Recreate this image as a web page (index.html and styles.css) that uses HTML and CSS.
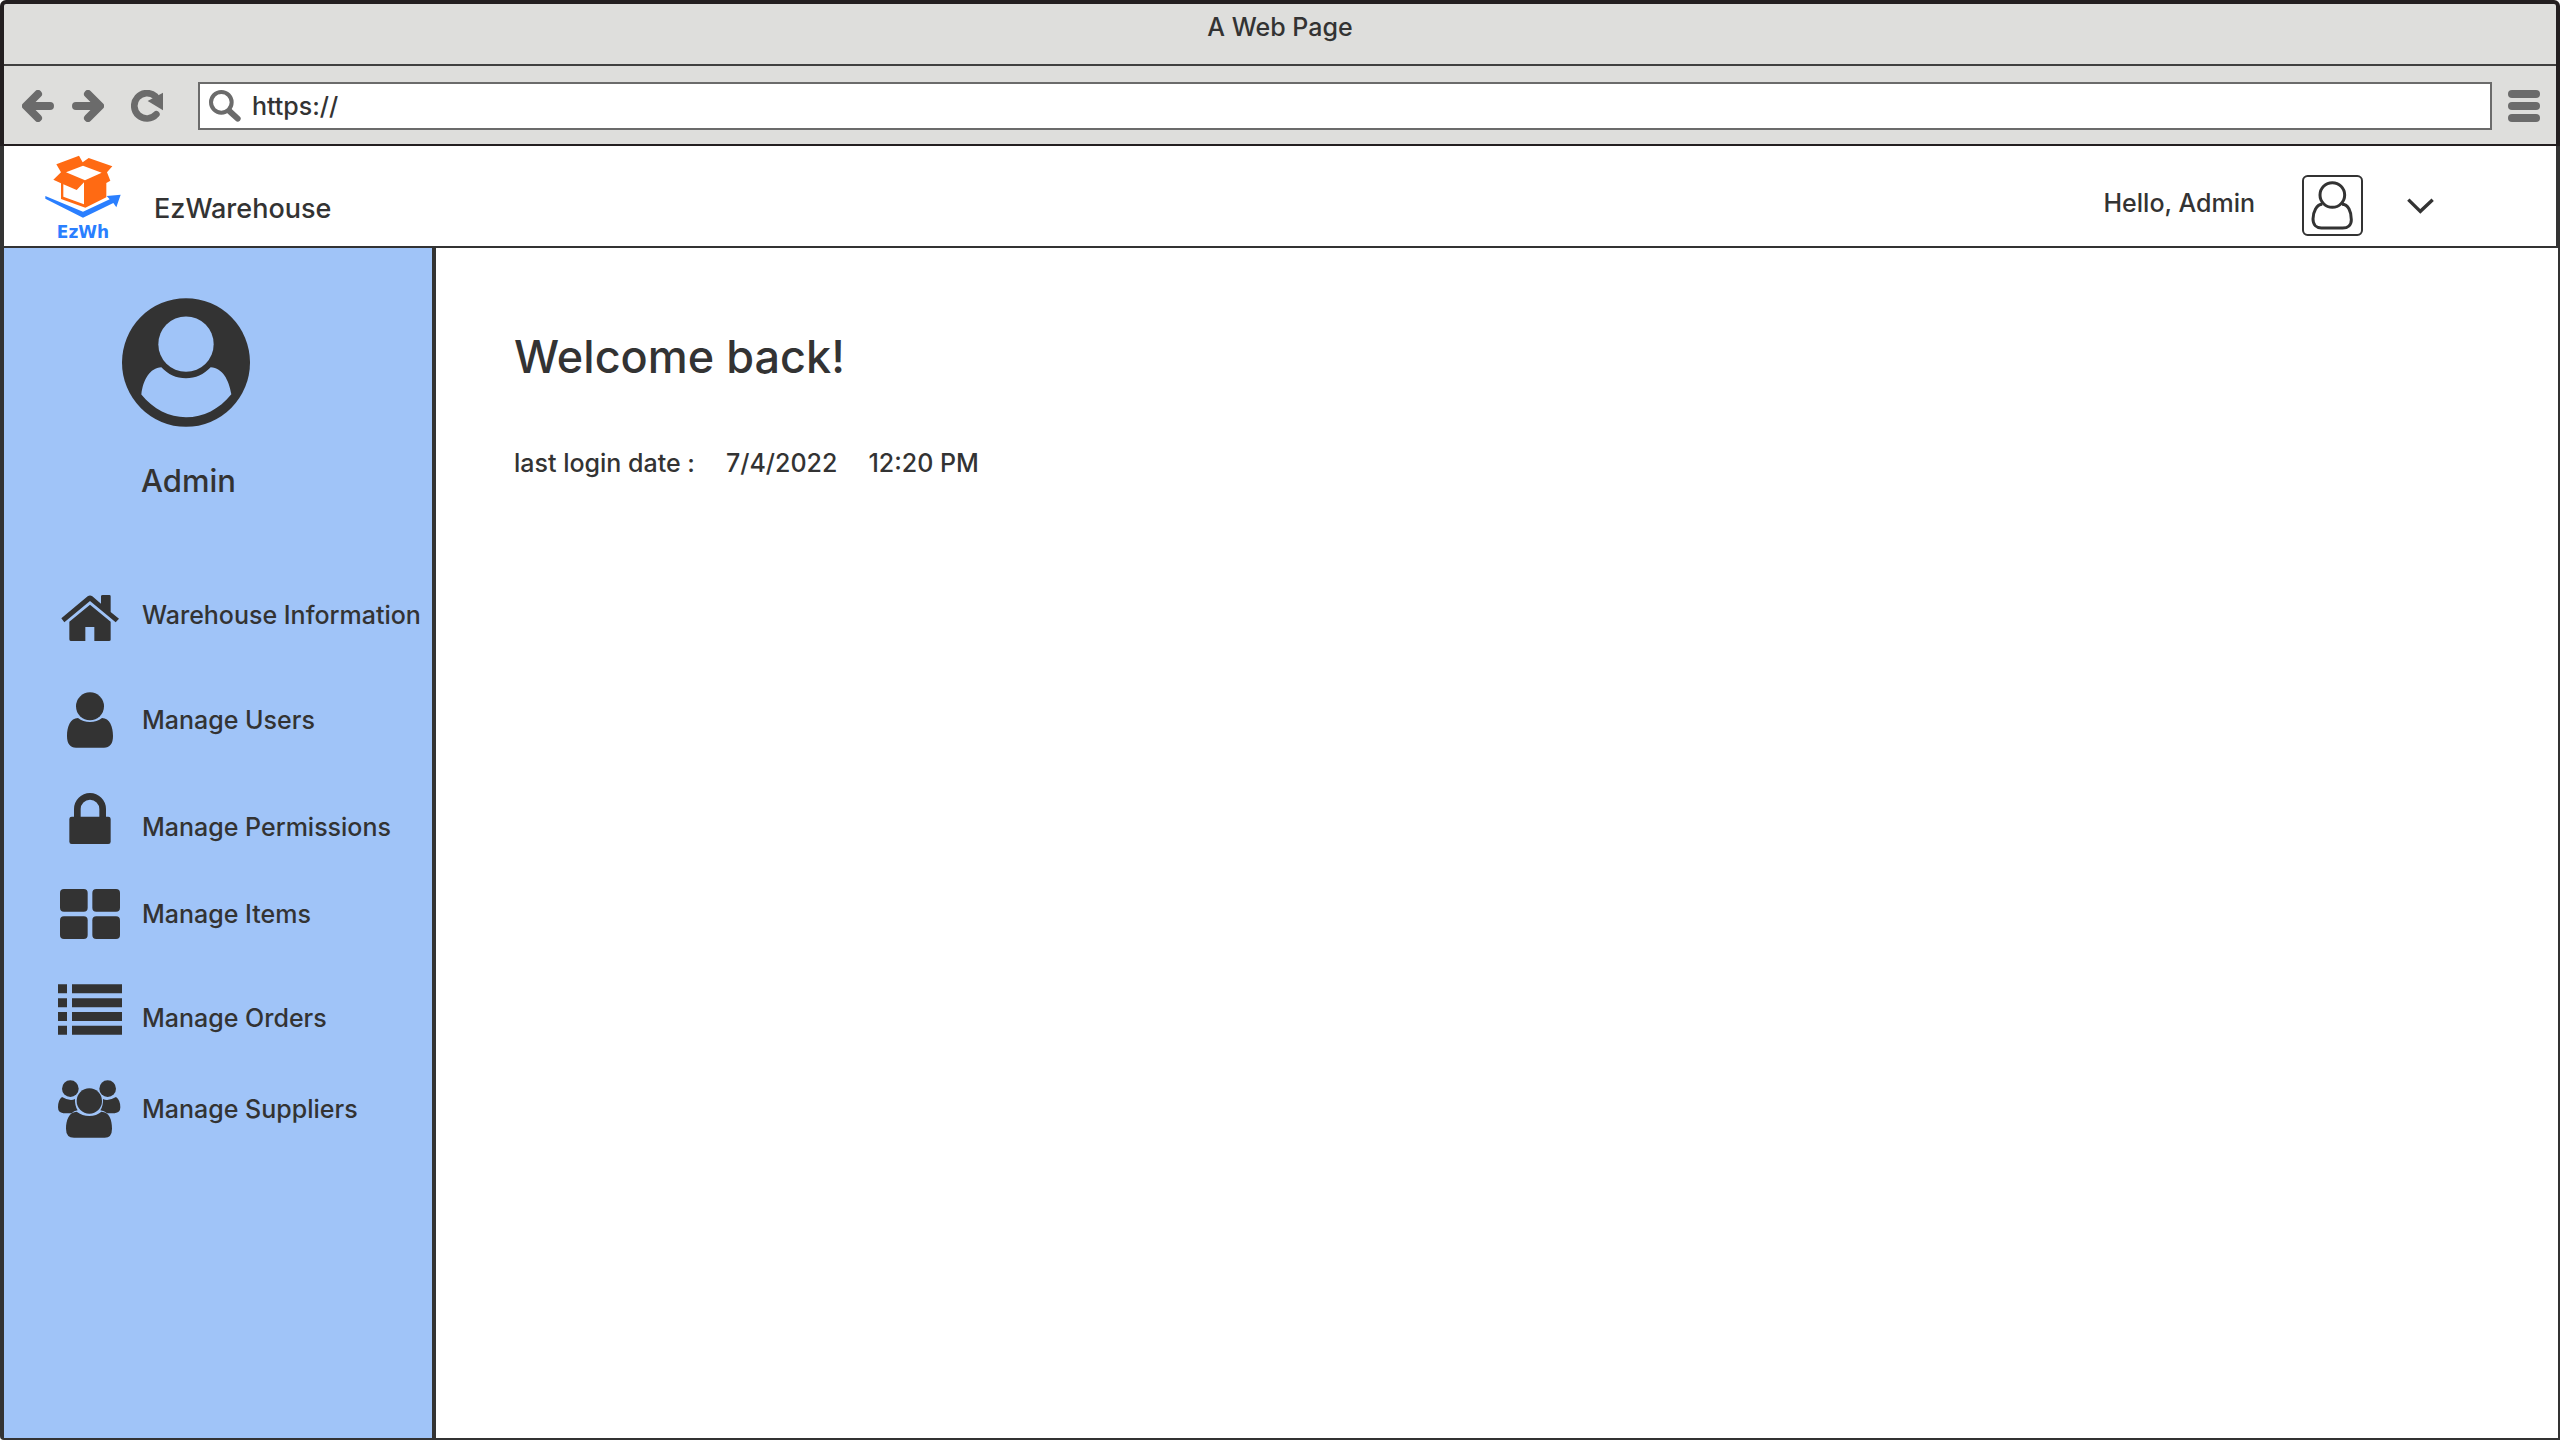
FILE: index.html
```html
<!DOCTYPE html>
<html lang="en">
<head>
<meta charset="utf-8">
<title>EzWarehouse</title>
<link rel="stylesheet" href="styles.css">
</head>
<body>
<div class="chrome">
  <div class="titlebar">A Web Page</div>
  <div class="toolbar">
    <button class="tool back" type="button" aria-label="Back">
      <svg viewBox="0 0 96 96"><path d="M84 48H16M48 12L12 48L48 84" fill="none" stroke="#6b6b6b" stroke-width="24" stroke-linecap="round" stroke-linejoin="round"/></svg>
    </button>
    <button class="tool forward" type="button" aria-label="Forward">
      <svg viewBox="0 0 96 96"><path d="M12 48H80M48 12L84 48L48 84" fill="none" stroke="#6b6b6b" stroke-width="24" stroke-linecap="round" stroke-linejoin="round"/></svg>
    </button>
    <button class="tool reload" type="button" aria-label="Reload">
      <svg viewBox="0 0 96 96"><path d="M76 73A38 38 0 1 1 73 19" fill="none" stroke="#6b6b6b" stroke-width="20" stroke-linecap="round"/><path d="M96 8V61L50 33Z" fill="#6b6b6b"/></svg>
    </button>
    <div class="address">
      <svg class="search" viewBox="0 0 96 96"><circle cx="37" cy="37" r="31" fill="none" stroke="#6b6b6b" stroke-width="12"/><path d="M61 63L86 86" fill="none" stroke="#6b6b6b" stroke-width="18" stroke-linecap="round"/></svg>
      <input class="url" type="text" value="https://" aria-label="Address">
    </div>
    <button class="tool menu" type="button" aria-label="Menu">
      <svg viewBox="0 0 32 32" fill="#6b6b6b"><rect width="32" height="8" rx="4"/><rect y="12" width="32" height="8" rx="4"/><rect y="24" width="32" height="8" rx="4"/></svg>
    </button>
  </div>
</div>

<header class="header">
  <a class="logo" href="#" aria-label="EzWh home">
    <svg class="logo-mark" viewBox="134 465 228 189">
      <path d="M168 493L236 467L247 487L265 474L336 499L320 517L330 542L318 549V592L255 623L182 597V550L159 539L182 517Z" fill="#ff6a13"/>
      <path d="M197 517L248 497L304 518L254 541ZM189 553L229 570L251 547V613L189 590Z" fill="#fff"/>
      <path d="M135 588L248 635L328 598L319 588L361 584L348 622L339 609L248 653L135 596Z" fill="#2a7fff"/>
    </svg>
    <span class="logo-text">EzWh</span>
  </a>
  <span class="brand">EzWarehouse</span>
  <span class="hello">Hello, Admin</span>
  <button class="account" type="button" aria-label="Account menu">
    <svg class="avatar-box" viewBox="0 0 183 183" fill="none" stroke="#333"><rect x="3" y="3" width="177" height="177" rx="14" stroke-width="6"/><circle cx="91" cy="60" r="37" stroke-width="9"/><path d="M61 88C44 88 33 110 33 132C33 150 44 159 58 159H122C138 159 148 150 148 134C148 110 139 88 120 88" stroke-width="9"/></svg>
    <svg class="chevron" viewBox="0 0 81 48"><path d="M4 5L40 40L77 5" fill="none" stroke="#333" stroke-width="10"/></svg>
  </button>
</header>

<div class="body">
  <aside class="sidebar">
    <div class="profile">
      <svg class="portrait" viewBox="0 0 384 386"><ellipse cx="192" cy="193" rx="192" ry="193" fill="#333"/><g fill="#a0c4f8"><circle cx="192" cy="138" r="83"/><path d="M118 207C84 209 63 244 58 289C94 334 142 357 192 357C244 357 292 333 328 288C320 243 302 210 266 207C245 229 221 240 192 240C162 240 139 229 118 207Z"/></g></svg>
      <span class="profile-name">Admin</span>
    </div>
    <nav class="nav">
      <a class="item high" href="#">
        <svg viewBox="0 0 192 156" height="52" fill="#333"><path d="M10 70L89 4Q96 -1 103 4L129 26V4Q129 0 134 0H154Q158 0 158 4V51L183 71L173 82L96 18L19 82Z"/><path d="M96 29L158 80V134Q158 138 153 138H109V96H82V138H38Q34 138 34 133V80Z"/></svg>
        <span>Warehouse Information</span>
      </a>
      <a class="item" href="#">
        <svg viewBox="0 0 192 168" height="56" fill="#333"><circle cx="96" cy="43" r="42"/><path d="M60 78C37 78 27 104 27 132C27 156 37 167 54 167H138C155 167 165 156 165 132C165 104 155 78 132 78C113 94 79 94 60 78Z"/></svg>
        <span>Manage Users</span>
      </a>
      <a class="item low" href="#">
        <svg viewBox="0 0 192 153" height="51" fill="#333"><path d="M58 75V48A38 38 0 0 1 134 48V75" fill="none" stroke="#333" stroke-width="20"/><rect x="34" y="71" width="124" height="82" rx="7"/></svg>
        <span>Manage Permissions</span>
      </a>
      <a class="item" href="#">
        <svg viewBox="0 0 192 150" height="50" fill="#333"><rect x="6" width="83" height="68" rx="12"/><rect x="103" width="83" height="68" rx="12"/><rect x="6" y="82" width="83" height="68" rx="12"/><rect x="103" y="82" width="83" height="68" rx="12"/></svg>
        <span>Manage Items</span>
      </a>
      <a class="item low" href="#">
        <svg viewBox="0 0 192 153" height="51" fill="#333"><path d="M0 1H27V28H0ZM42 1H192V28H42ZM0 43H27V70H0ZM42 43H192V70H42ZM0 84H27V111H0ZM42 84H192V111H42ZM0 125H27V152H0ZM42 125H192V152H42Z"/></svg>
        <span>Manage Orders</span>
      </a>
      <a class="item" href="#">
        <svg viewBox="0 0 192 174" height="58" fill="#333"><circle cx="37" cy="26" r="25"/><circle cx="149" cy="26" r="25"/><path d="M12 51Q36 65 51 57Q50 77 59 91Q47 93 41 100H16Q0 98 0 82Q0 60 12 51ZM174 51Q150 65 135 57Q136 77 127 91Q139 93 147 100H170Q187 98 187 82Q187 60 174 51Z"/><circle cx="94" cy="63" r="38"/><path d="M56 95C34 95 24 120 24 146Q24 173 48 173H140Q162 173 162 146C162 120 154 95 130 95C112 112 77 112 56 95Z"/></svg>
        <span>Manage Suppliers</span>
      </a>
    </nav>
  </aside>
  <main class="main">
    <h1 class="welcome">Welcome back!</h1>
    <p class="login"><span>last login date :</span><span>7/4/2022</span><span>12:20 PM</span></p>
  </main>
</div>
</body>
</html>
```
FILE: styles.css
```css
* { box-sizing: border-box; }

body {
  margin: 0;
  min-height: 100vh;
  display: flex;
  flex-direction: column;
  background: #fff;
  color: #333;
  font-family: Inter, sans-serif;
  font-size: 25px;
  font-weight: 450;
  line-height: 34px;
}

svg { display: block; flex: none; }

button {
  padding: 0;
  border: 0;
  background: none;
  cursor: pointer;
}

a { color: inherit; text-decoration: none; }

/* Browser frame */
.chrome {
  border: 4px solid #231f20;
  border-bottom-width: 2px;
  border-radius: 6px 6px 0 0;
  background: #dededc;
}

.titlebar {
  height: 62px;
  padding-top: 6px;
  border-bottom: 2px solid #404040;
  text-align: center;
}

.toolbar {
  display: flex;
  align-items: center;
  height: 78px;
  padding: 2px 16px 0 18px;
}

.tool { width: 32px; height: 32px; }
.forward { margin-left: 18px; }
.reload { margin-left: 27px; }
.menu { margin-left: 16px; }

.address {
  flex: 1;
  display: flex;
  align-items: center;
  gap: 11px;
  height: 48px;
  margin-left: 35px;
  padding-left: 9px;
  border: 2px solid #6b6b6b;
  background: #fff;
}

.search { width: 32px; height: 32px; }

.url {
  flex: 1;
  height: 34px;
  padding: 0;
  border: 0;
  outline: 0;
  background: none;
  color: inherit;
  font: inherit;
}

/* Application header */
.header {
  display: flex;
  align-items: flex-start;
  height: 102px;
  padding: 9px 122px 0 41px;
  border: solid #333;
  border-width: 0 4px 2px;
}

.logo {
  display: flex;
  flex-direction: column;
  align-items: center;
  width: 76px;
}

.logo-mark { width: 76px; height: 63px; }

.logo-text {
  margin-top: 4px;
  color: #2a7fff;
  font: bold 17px/20px "DejaVu Sans", sans-serif;
}

.brand { margin: 37px auto 0 33px; font-size: 27px; }
.hello { margin: 31px 47px 0 0; }

.account {
  display: flex;
  align-items: center;
  gap: 44px;
  margin-top: 20px;
}

.avatar-box { width: 61px; height: 61px; }
.chevron { width: 27px; height: 16px; }

/* Page body */
.body {
  flex: 1;
  display: flex;
  border: solid #333;
  border-width: 0 2px 2px 4px;
  border-bottom-left-radius: 4px;
}

.sidebar {
  flex: none;
  width: 432px;
  padding-top: 50px;
  border-right: 4px solid #333;
  background: #a0c4f8;
}

.profile {
  display: flex;
  flex-direction: column;
  align-items: flex-start;
  padding-left: 118px;
}

.portrait { width: 128px; height: 129px; }

.profile-name {
  margin: 34px 0 0 19px;
  font-size: 31px;
  line-height: 40px;
}

.nav {
  display: flex;
  flex-direction: column;
  gap: 45px;
  margin-top: 94px;
  padding-left: 54px;
}

.item {
  display: flex;
  align-items: center;
  gap: 20px;
  white-space: nowrap;
}

.item svg { width: 64px; }
.item.high { align-items: flex-start; line-height: 40px; }
.item.low { align-items: flex-end; }

.main { flex: 1; padding: 79px 78px; }

.welcome {
  margin: 0;
  font-size: 45px;
  font-weight: 450;
  line-height: 60px;
}

.login {
  display: flex;
  gap: 31px;
  margin: 59px 0 0;
}
```
